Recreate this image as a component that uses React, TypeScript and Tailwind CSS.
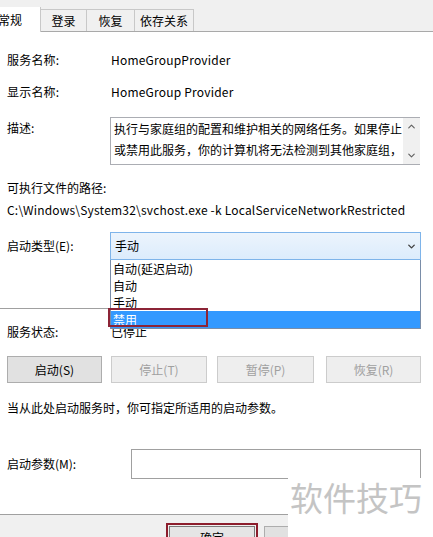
import { ChevronDown, ChevronUp } from 'lucide-react';

const font = { fontFamily: "'Noto Sans CJK SC', sans-serif" };

function Row({ label, children }: { label: string; children?: React.ReactNode }) {
  return (
    <div className="flex items-center h-[20px]">
      <div className="w-[104px] shrink-0">{label}</div>
      {children}
    </div>
  );
}

function Btn({ label, enabled, w }: { label: string; enabled?: boolean; w: string }) {
  return (
    <div
      className={`h-[27px] ${w} flex items-center justify-center border ${
        enabled ? 'border-[#adadad] bg-[#e1e1e1] text-black' : 'border-[#cccccc] bg-[#eeeeee] text-[#a0a0a0]'
      }`}
    >
      {label}
    </div>
  );
}

export default function App() {
  return (
    <div className="relative w-[433px] h-[537px] bg-white overflow-hidden text-[12px] text-black" style={font}>
      {/* Tabs */}
      <div className="h-[32px] bg-[#f0f0f0] border-b border-[#a9a9a9] flex items-end">
        <div className="h-[25px] w-[41px] bg-white border-r border-[#c8c8c8] -mb-px flex items-center relative z-10">
          <span className="-ml-[2px]">常规</span>
        </div>
        <div className="h-[22px] w-[46px] border-t border-r border-[#c8c8c8] bg-[#f0f0f0] flex items-center justify-center">登录</div>
        <div className="h-[22px] w-[48px] border-t border-r border-[#c8c8c8] bg-[#f0f0f0] flex items-center justify-center">恢复</div>
        <div className="h-[22px] w-[59px] border-t border-r border-[#c8c8c8] bg-[#f0f0f0] flex items-center justify-center">依存关系</div>
      </div>

      <div className="flex flex-col">
        <div className="px-[7px] mt-[18px] tracking-[0.2px]">
          <Row label="服务名称:">HomeGroupProvider</Row>
        </div>
        <div className="px-[7px] mt-[12px] tracking-[0.2px]">
          <Row label="显示名称:">HomeGroup Provider</Row>
        </div>

        {/* Description */}
        <div className="px-[7px] mt-[15px] flex">
          <div className="w-[103px] shrink-0 pt-[2px]">描述:</div>
          <div className="w-[310px] h-[48px] border border-[#abadb3] border-r-0 flex">
            <div className="flex-1 pl-[3px] leading-[21px] overflow-hidden">
              执行与家庭组的配置和维护相关的网络任务。如果停止或禁用此服务，你的计算机将无法检测到其他家庭组，
            </div>
            <div className="w-[17px] bg-[#f0f0f0] flex flex-col items-center justify-between py-[3px] text-[#606060]">
              <ChevronUp size={11} strokeWidth={2.5} />
              <ChevronDown size={11} strokeWidth={2.5} />
            </div>
          </div>
        </div>

        <div className="px-[7px] mt-[13px] h-[20px] flex items-center">可执行文件的路径:</div>
        <div className="px-[7px] mt-[2px] h-[20px] flex items-center whitespace-nowrap tracking-[0.2px]">
          C:\Windows\System32\svchost.exe -k LocalServiceNetworkRestricted
        </div>

        {/* Startup type */}
        <div className="px-[7px] mt-[12px] flex items-center">
          <div className="w-[103px] shrink-0">启动类型(E):</div>
          <div className="relative w-[311px] h-[28px]">
            <div className="h-full border border-[#7eb4ea] bg-gradient-to-b from-[#ecf4fc] to-[#dcecfc] flex items-center justify-between pl-[4px] pr-[3px]">
              <span>手动</span>
              <ChevronDown size={11} strokeWidth={3} className="text-[#404040]" />
            </div>
            {/* Open list */}
            <div className="absolute left-0 top-[28px] w-[311px] bg-white border border-[#7a8da8] border-t-0 z-20 flex flex-col">
              <div className="h-[17px] leading-[17px] pl-[2px]">自动(延迟启动)</div>
              <div className="h-[17px] leading-[17px] pl-[2px]">自动</div>
              <div className="h-[17px] leading-[17px] pl-[2px]">手动</div>
              <div className="h-[17px] leading-[17px] pl-[2px] bg-[#3399ff] text-white relative">
                禁用
                <div className="absolute -left-[3px] -top-[3px] w-[100px] h-[19px] border-2 border-[#8c2436]" />
              </div>
            </div>
          </div>
        </div>

        <div className="mt-[48px] h-px w-[420px] bg-[#a0a0a0]" />

        <div className="px-[7px] mt-[13px]">
          <Row label="服务状态:">已停止</Row>
        </div>

        <div className="px-[7px] mt-[14px] flex">
          <Btn label="启动(S)" enabled w="w-[95px]" />
          <div className="w-[9px]" />
          <Btn label="停止(T)" w="w-[96px]" />
          <div className="w-[10px]" />
          <Btn label="暂停(P)" w="w-[97px]" />
          <div className="w-[12px]" />
          <Btn label="恢复(R)" w="w-[95px]" />
        </div>

        <div className="px-[7px] mt-[15px] h-[20px] flex items-center">当从此处启动服务时，你可指定所适用的启动参数。</div>

        <div className="px-[7px] mt-[31px] flex items-center">
          <div className="w-[124px] shrink-0">启动参数(M):</div>
          <div className="w-[290px] h-[30px] border border-[#a0a0a0]" />
        </div>

        {/* Bottom bar */}
        <div className="mt-[35px] h-[60px] bg-[#f0f0f0] border-t border-[#a0a0a0] flex items-start pt-[8px] pl-[166px] gap-[6px]">
          <div className="border-2 border-[#8c1d2c] p-px">
            <div className="w-[86px] h-[24px] border border-[#7a7a7a] bg-[#e5e5e5] flex items-center justify-center">确定</div>
          </div>
          <div className="w-[86px] h-[24px] mt-[3px] border border-[#adadad] bg-[#e1e1e1] flex items-center justify-center">取消</div>
        </div>
      </div>

      {/* Watermark */}
      <div className="absolute left-[288px] top-[478px] w-[145px] h-[59px] bg-white z-30 flex items-start pl-[2px]">
        <span className="text-[33px] leading-[38px] text-[#c4c4c4]">软件技巧</span>
      </div>
    </div>
  );
}
